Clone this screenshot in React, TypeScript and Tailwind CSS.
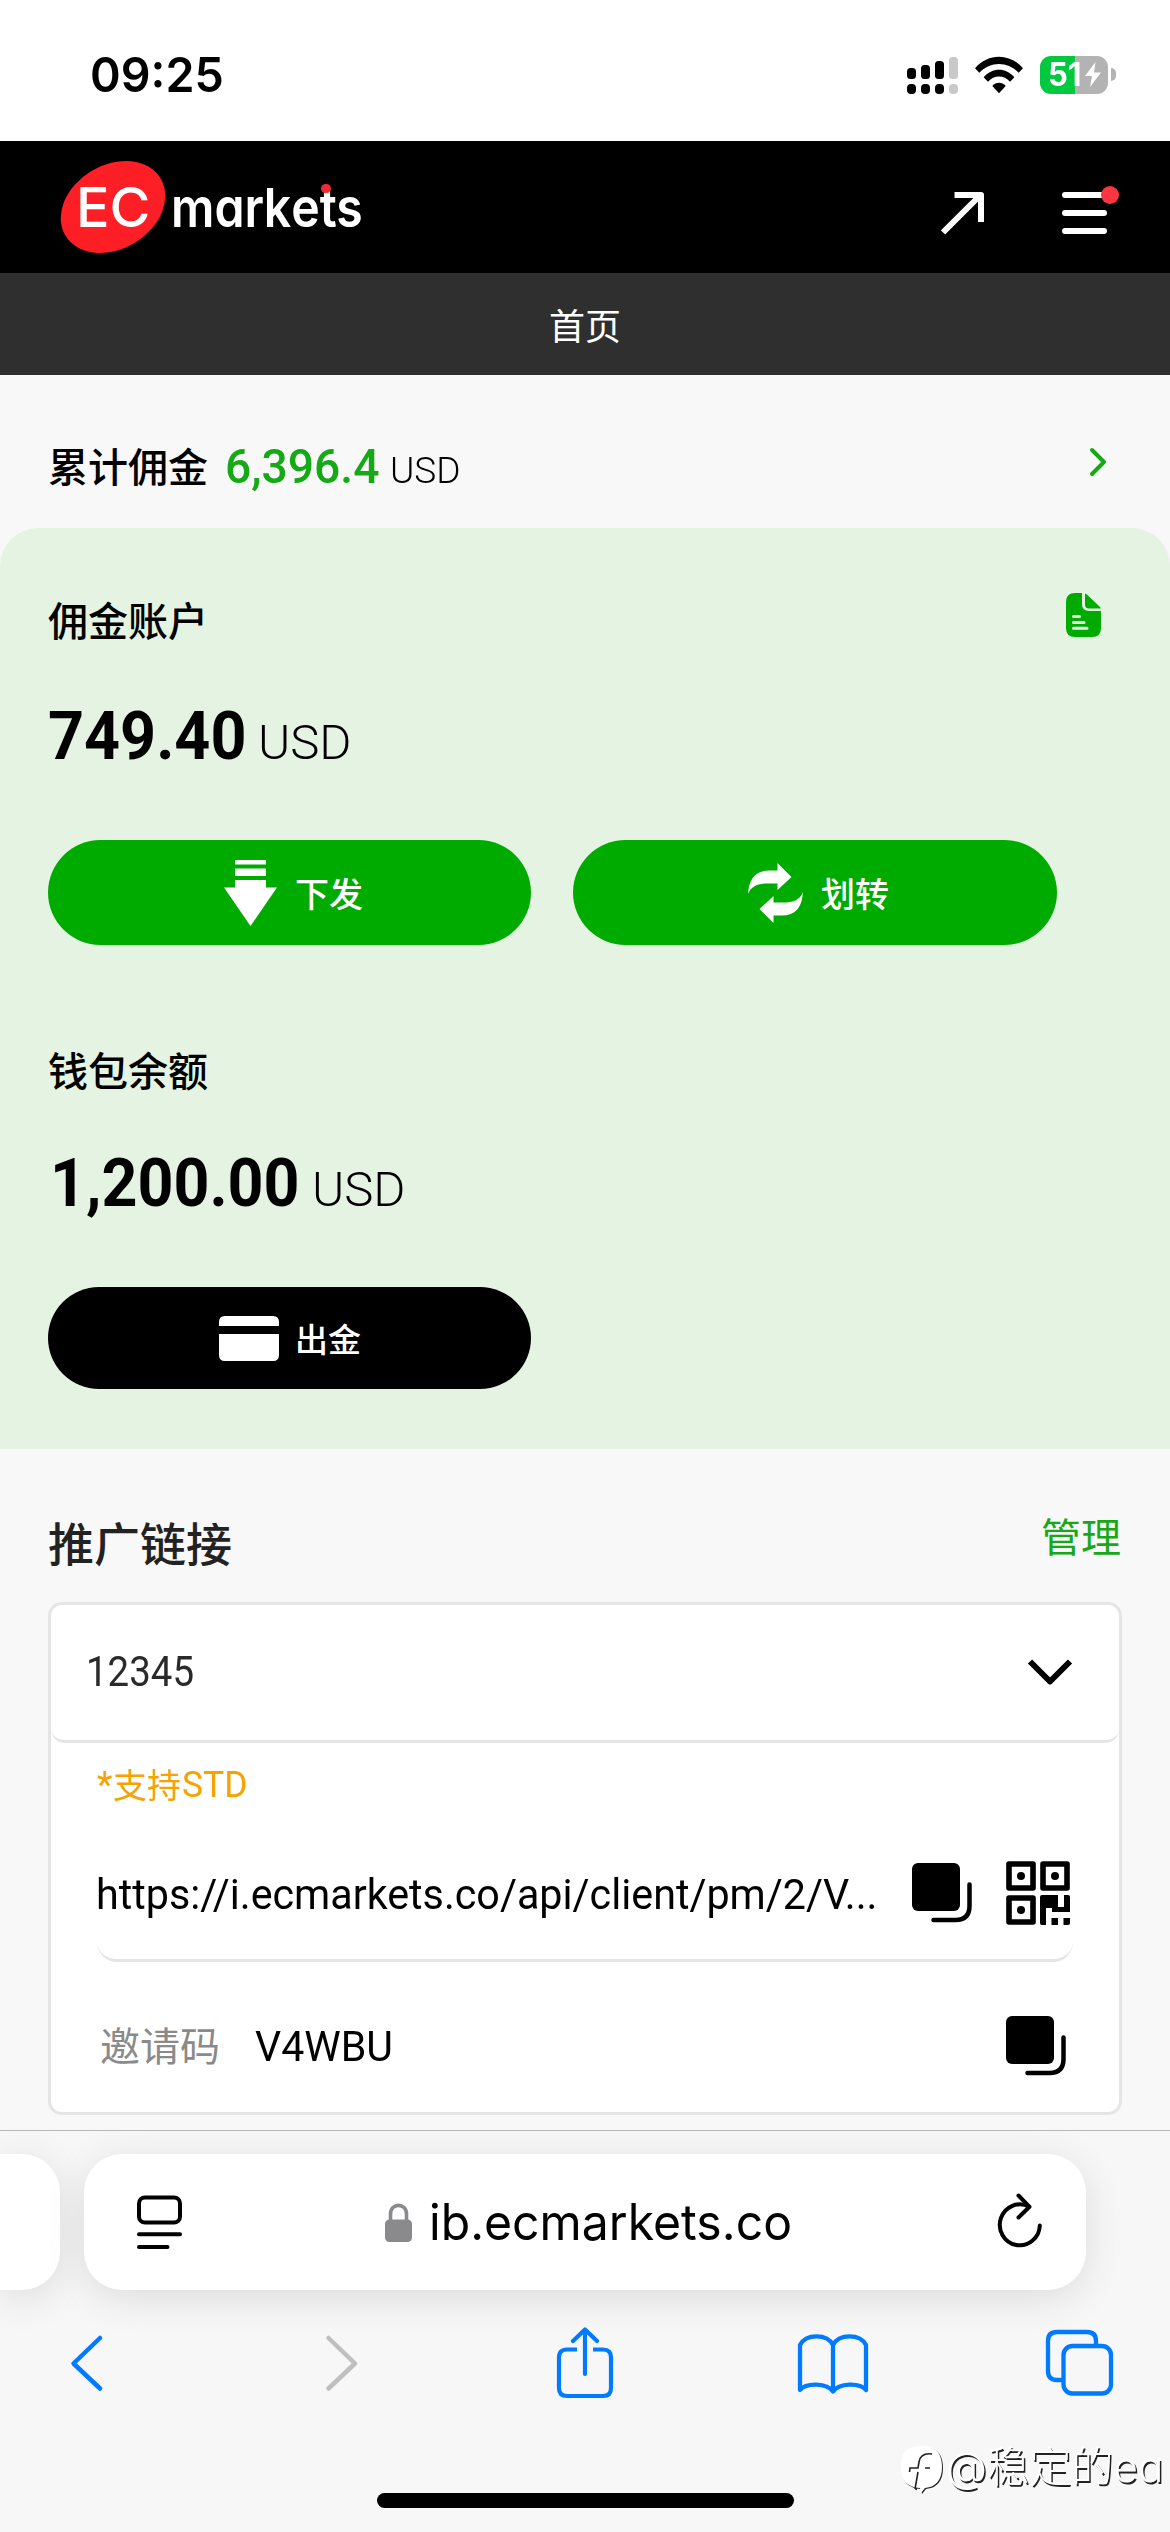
import { useLayoutEffect, useRef, useState, type ReactNode } from "react";

/** Single-line text condensed or stretched horizontally to fill the width of its box. */
function Fit({ className, children }: { className: string; children: ReactNode }) {
  const box = useRef<HTMLSpanElement>(null);
  const text = useRef<HTMLSpanElement>(null);
  const [scale, setScale] = useState(1);
  useLayoutEffect(() => {
    if (box.current && text.current) {
      setScale(box.current.offsetWidth / text.current.offsetWidth);
    }
  }, []);
  return (
    <span ref={box} className={"block shrink-0 whitespace-nowrap leading-none " + className}>
      <span ref={text} className="inline-block origin-left" style={{ transform: `scaleX(${scale})` }}>
        {children}
      </span>
    </span>
  );
}

function StatusBar() {
  return (
    <div className="flex h-[141px] items-center justify-between bg-white pt-[8px] pr-[54px] pl-[90px]">
      <Fit className="w-[134px] font-[Inter] text-[48px] font-semibold text-black">09:25</Fit>
      <div className="flex items-center">
        <svg className="h-[40px] w-[52px]" viewBox="0 0 52 40">
          <g fill="#000">
            <rect x="0" y="13" width="9" height="11" rx="3.5" />
            <rect x="14" y="10" width="9" height="14" rx="3.5" />
            <rect x="28" y="6" width="9" height="18" rx="3.5" />
            <rect x="0" y="29" width="9" height="10" rx="4" />
            <rect x="14" y="29" width="9" height="10" rx="4" />
            <rect x="28" y="29" width="9" height="10" rx="4" />
          </g>
          <g fill="#c9c9c9">
            <rect x="42" y="2" width="9" height="22" rx="3.5" />
            <rect x="42" y="29" width="9" height="10" rx="4" />
          </g>
        </svg>
        <svg className="ml-4 h-[38px] w-[48px]" viewBox="0 0 48 38">
          <path d="M0 12.2C13-3.2 35-3.2 48 12.2l-4.300 4.600C33 5 15 5 4.300 16.800z" />
          <path d="M8.600 21.200c8.500-10 22.300-10 30.800 0l-4.400 4.600c-6-7-16-7-22 0z" />
          <path d="M17.300 30c3.700-4.400 9.700-4.400 13.400 0L24 37.200z" />
        </svg>
        <div className="relative ml-[17px] flex h-[38px] w-[68px] items-center overflow-hidden rounded-[11px] bg-[linear-gradient(to_right,#00c940_35px,#b3b3b3_35px)] pl-[8px]">
          <Fit className="w-[33px] font-[Inter] text-[33px] font-bold text-white">51</Fit>
          <svg className="ml-[4px] h-[25px] w-[16px]" viewBox="0 0 16 25">
            <path fill="#fff" d="M10.500 0 0 14h7L5 25 16 10.500H9z" />
          </svg>
        </div>
        <div className="ml-[3px] h-[13px] w-[5px] rounded-r-full bg-[#b3b3b3]" />
      </div>
    </div>
  );
}

function Logo() {
  return (
    <div className="flex items-center">
      <div className="relative flex h-[92px] w-[106px] items-center justify-center">
        <svg className="absolute inset-0 h-full w-full" viewBox="0 0 106 92">
          <ellipse cx="53" cy="46" rx="55.500" ry="42" fill="#fe1f26" transform="rotate(-31 53 46)" />
        </svg>
        <Fit className="relative w-[75px] font-[Inter] text-[55px] font-medium text-white">EC</Fit>
      </div>
      <div className="relative ml-[5px] pt-[1px]">
        <Fit className="w-[192px] font-[Inter] text-[54px] font-semibold text-white [font-feature-settings:'cv11']">
          mar<span className="[font-variant:small-caps]">k</span>ets
        </Fit>
        <span className="absolute top-[4px] left-[150px] h-[9px] w-[10px] rounded-full bg-[#ee2a33]" />
      </div>
    </div>
  );
}

function Header() {
  return (
    <div className="flex h-[132px] items-center justify-between bg-black pr-[51px] pl-[60px]">
      <Logo />
      <div className="flex items-center pt-[12px]">
        <svg className="h-[44px] w-[44px]" viewBox="0 0 44 44" fill="none" stroke="#fff" strokeWidth="6">
          <path d="M2 41.500 39 4.500" />
          <path d="M13.500 4H40v27" strokeLinejoin="round" />
        </svg>
        <div className="relative ml-[77px] flex w-[57px] flex-col gap-[12px]">
          <span className="h-[6px] w-[45px] rounded-full bg-white" />
          <span className="h-[6px] w-[45px] rounded-full bg-white" />
          <span className="h-[6px] w-[45px] rounded-full bg-white" />
          <span className="absolute -top-[6px] right-0 h-[18px] w-[18px] rounded-full bg-[#fb3640]" />
        </div>
      </div>
    </div>
  );
}

function CommissionTotal() {
  return (
    <div className="flex h-[153px] items-center justify-between pr-[62px] pl-[48px] text-black">
      <div className="flex items-center pt-[30px]">
        <span className="-mt-[3px] text-[40px] leading-none font-medium">累计佣金</span>
        <Fit className="ml-[17px] w-[154px] font-[Roboto] text-[48px] font-medium text-[#16a916]">6,396.4</Fit>
        <Fit className="mt-[8px] ml-[11px] w-[71px] font-[Roboto] text-[36px] font-light">USD</Fit>
      </div>
      <svg className="mt-[21px] h-[32px] w-[20px]" viewBox="0 0 20 32" fill="none" stroke="#16a916" strokeWidth="4" strokeLinecap="round" strokeLinejoin="round">
        <path d="m4 4 12 12L4 28" />
      </svg>
    </div>
  );
}

function Amount({ value, valueClass }: { value: string; valueClass: string }) {
  return (
    <div className="flex h-[67px] items-center">
      <Fit className={"pt-[2px] font-[Roboto] text-[66px] font-bold " + valueClass}>{value}</Fit>
      <Fit className="mt-[14px] ml-[12px] w-[93px] font-[Roboto] text-[48px] font-light">USD</Fit>
    </div>
  );
}

function Accounts() {
  return (
    <div className="h-[921px] rounded-t-[38px] bg-[#e5f3e3] px-[48px] text-black">
      <div className="flex h-[174px] items-center justify-between pr-[21px]">
        <span className="pt-[8px] text-[40px] leading-none font-medium">佣金账户</span>
        <svg className="h-[44px] w-[35px]" viewBox="0 0 35 44">
          <path fill="#00ab00" d="M9 0h7v11q0 7 7 7h12v17q0 9-9 9H9q-9 0-9-9V9q0-9 9-9Z" />
          <path fill="#00ab00" d="M19 0.500q2 .5 4 3L34 14q.8.800.5 1.500H23q-4 0-4-4Z" />
          <path stroke="#e5f3e3" strokeWidth="3" strokeLinecap="round" d="M7.500 23.500h6M7.500 29.500h10.500M7.500 35.200H21" />
        </svg>
      </div>
      <Amount value="749.40" valueClass="w-[198px]" />
      <div className="mt-[71px] flex gap-[42px] text-[34px] font-medium text-white">
        <div className="flex h-[105px] w-[483px] items-center rounded-full bg-[#00ab00] pl-[176px]">
          <svg className="h-[66px] w-[53px]" viewBox="0 0 53 66" fill="#fff">
            <path d="M11 0h31v4.500H11zM11 8.500h31v7.500H11zM11 20h31v7.500h11L26.500 66 0 27.500h11z" />
          </svg>
          <span className="ml-[18px] leading-none">下发</span>
        </div>
        <div className="flex h-[105px] w-[484px] items-center rounded-full bg-[#00ab00] pl-[175px]">
          <svg className="h-[60px] w-[55px]" viewBox="0 0 55 60" fill="#fff">
            <path d="M0 31C1 15 8 7.500 21 7.500h8.500V0L43.500 14 29.500 27V20.500H20C10 20.500 3.500 22.500 0 31Z" />
            <path d="M55 29C54 45 47 52.500 34 52.500h-8.500V60L11.500 46 25.500 33v6.500H35C45 39.500 51.500 37.500 55 29Z" />
          </svg>
          <span className="ml-[18px] leading-none">划转</span>
        </div>
      </div>
      <div className="mt-[104px] text-[40px] leading-none font-medium">钱包余额</div>
      <div className="mt-[60px] pl-[2px]">
        <Amount value="1,200.00" valueClass="w-[250px]" />
      </div>
      <div className="mt-[71px] flex h-[102px] w-[483px] items-center rounded-full bg-black pl-[171px] text-[33px] font-medium text-white">
        <svg className="h-[45px] w-[60px]" viewBox="0 0 60 45" fill="#fff">
          <path d="M6 0h48q6 0 6 6v4H0V6q0-6 6-6ZM0 18h60v21q0 6-6 6H6q-6 0-6-6Z" />
        </svg>
        <span className="ml-[16px] leading-none">出金</span>
      </div>
    </div>
  );
}

function CopyIcon() {
  return (
    <svg className="h-[60px] w-[60px] shrink-0" viewBox="0 0 60 60">
      <rect x="0" y="0" width="48" height="48" rx="6" />
      <path d="M57.500 21.500V43q0 14-14 14H21.500" fill="none" stroke="#000" strokeWidth="4.500" strokeLinecap="round" />
    </svg>
  );
}

function QrIcon() {
  return (
    <svg className="h-[64px] w-[64px] shrink-0" viewBox="0 0 64 64">
      <g fill="none" stroke="#000" strokeWidth="5.600" strokeLinejoin="round">
        <rect x="3" y="3" width="24" height="24" />
        <rect x="37" y="3" width="24" height="24" />
        <rect x="3" y="37" width="24" height="24" />
      </g>
      <circle cx="15" cy="15" r="4" />
      <circle cx="49" cy="15" r="4" />
      <circle cx="15" cy="49" r="4" />
      <path d="M36 34h16v12h6V34h4q2 0 2 2v15H46v-4h-6v17h-4q-2 0-2-2V36q0-2 2-2ZM45.500 57H52v7h-6.500zM57.500 57H64v5q0 2-2 2h-4.500z" />
    </svg>
  );
}

function Referral() {
  return (
    <div className="h-[681px] px-[48px]">
      <div className="flex h-[153px] items-center justify-between pr-px">
        <span className="pt-[30px] text-[46px] leading-none font-medium text-[#222]">推广链接</span>
        <span className="pt-[18px] text-[40px] leading-none text-[#16a916]">管理</span>
      </div>
      <div className="h-[513px] rounded-[14px] border-[3px] border-[#e5e5e5] bg-white text-black">
        <div className="flex h-[138px] items-center justify-between rounded-b-[14px] border-b-[3px] border-[#e5e5e5] pr-[46px] pb-[2px] pl-[35px]">
          <Fit className="w-[108px] font-[Roboto] text-[42px] font-normal text-[#2a2a2a]">12345</Fit>
          <svg className="h-[26px] w-[46px]" viewBox="0 0 46 26" fill="none" stroke="#000" strokeWidth="6">
            <path d="m3 2.500 20 20 20-20" strokeLinejoin="round" />
          </svg>
        </div>
        <div className="pr-[46px] pl-[46px]">
          <div className="flex h-[84px] items-center font-normal text-[#f5a300]">
            <Fit className="w-[16px] font-[Roboto] text-[36px]">*</Fit>
            <span className="-mt-[2px] text-[34px] leading-none">支持</span>
            <Fit className="ml-px w-[65px] font-[Roboto] text-[36px]">STD</Fit>
          </div>
          <div className="flex h-[135px] items-center rounded-b-[20px] border-b-[3px] border-[#e5e5e5]">
            <Fit className="-ml-px w-[781px] pt-[3px] font-[Roboto] text-[42px]">
              https://i.ecmarkets.co/api/client/pm/2/V...
            </Fit>
            <div className="ml-[35px] flex items-center gap-[34px]">
              <CopyIcon />
              <QrIcon />
            </div>
          </div>
          <div className="flex h-[150px] items-center pt-[17px] pl-[3px]">
            <span className="-mt-[3px] text-[40px] leading-none text-[#8a8a8a]">邀请码</span>
            <Fit className="ml-[35px] w-[138px] pt-[2px] font-[Roboto] text-[42px]">V4WBU</Fit>
            <div className="ml-auto pr-[7px]">
              <CopyIcon />
            </div>
          </div>
        </div>
      </div>
    </div>
  );
}

function Browser() {
  return (
    <div className="relative h-[402px] overflow-hidden border-t border-[#b8b8b8] bg-[#f7f7f7]">
      <div className="flex gap-[24px] pt-[23px]">
        <div className="h-[136px] w-[60px] rounded-r-[38px] bg-white shadow-[0_8px_40px_rgba(0,0,0,0.11)]" />
        <div className="flex h-[136px] w-[1002px] items-center rounded-[38px] bg-white pl-[51px] shadow-[0_8px_40px_rgba(0,0,0,0.11)]">
          <svg className="h-[56px] w-[49px]" viewBox="0 0 49 56" fill="none" stroke="#000" strokeWidth="4" strokeLinecap="round">
            <rect x="4" y="3.500" width="41" height="25" rx="6" />
            <path d="M4 40.300h41M4 53h28.500" />
          </svg>
          <svg className="ml-[201px] h-[39px] w-[27px]" viewBox="0 0 27 39">
            <rect x="0" y="16.500" width="27" height="22.500" rx="4.500" fill="#8a8a8d" />
            <path d="M5.500 18v-7c0-11.500 16-11.500 16 0v7" fill="none" stroke="#8a8a8d" strokeWidth="3.600" />
          </svg>
          <Fit className="ml-[17px] w-[363px] font-[Inter] text-[50px] text-black">ib.ecmarkets.co</Fit>
          <svg className="mb-[4px] ml-[203px] h-[56px] w-[50px]" viewBox="0 0 50 56" fill="none" stroke="#000" strokeWidth="4" strokeLinecap="round" strokeLinejoin="round">
            <path d="M44.800 33.500A20 20.500 0 1 1 34 14.600" />
            <path d="m23.500 3.500 11 11.300-11 10.700" />
          </svg>
        </div>
      </div>
      <div className="mt-[37px] flex h-[72px] items-center pl-[69px]">
        <svg className="h-[58px] w-[35px]" viewBox="0 0 35 58" fill="none" stroke="#007aff" strokeWidth="4.500" strokeLinecap="round" strokeLinejoin="round">
          <path d="M31 4 4.500 29.500 31 54.500" />
        </svg>
        <svg className="ml-[220px] h-[58px] w-[35px]" viewBox="0 0 35 58" fill="none" stroke="#bfbfbf" strokeWidth="4.500" strokeLinecap="round" strokeLinejoin="round">
          <path d="M4.500 4 31 29.500 4.500 54.500" />
        </svg>
        <svg className="ml-[196px] h-[72px] w-[60px]" viewBox="0 0 60 72" fill="none" stroke="#007aff" strokeWidth="4.200" strokeLinejoin="round">
          <path d="M22 22.500H12q-8 0-8 8V61q0 8 8 8h36q8 0 8-8V30.500q0-8-8-8H38" />
          <path d="M30 47V3M18 14 30 2.500 42 14" strokeLinecap="round" />
        </svg>
        <svg className="ml-[181px] h-[62px] w-[74px]" viewBox="0 0 74 62" fill="none" stroke="#007aff" strokeWidth="4.300" strokeLinecap="round" strokeLinejoin="round">
          <path d="M37 13C31 1.500 10 1.500 4 13v45c6-7.500 27-7.500 33 1.500 6-9 27-9 33-1.500V13C64 1.500 43 1.500 37 13ZM37 13v46" />
        </svg>
        <svg className="ml-[175px] h-[68px] w-[70px]" viewBox="0 0 70 68" fill="none" stroke="#007aff" strokeWidth="4.300">
          <path d="M18 51h-6q-9 0-9-9V12q0-9 9-9h30q9 0 9 9v5" />
          <rect x="18.500" y="17" width="47.500" height="47.500" rx="9" />
        </svg>
      </div>
      <div className="absolute top-[314px] left-[901px] flex items-center">
        <svg className="h-[48px] w-[43px] drop-shadow-[1px_1px_0_#222]" viewBox="0 0 43 48">
          <path fill="#fff" d="M20 1c14 0 21 6 21 21 0 13-6 20-17 21l-4 5-1-5C6 42 0 36 0 22 0 7 6 1 20 1Z" />
          <path fill="none" stroke="#222" strokeWidth="1.600" d="M31 9c-8-1-12 2-13 8l-1 6H9l-.5 4M17 27l-3 17M24 23h5" />
        </svg>
        <Fit className="-mt-[5px] ml-[2px] w-[217px] font-[Inter,'Noto_Sans_CJK_SC'] text-[42px] font-light text-white [font-feature-settings:'cv11'] [text-shadow:1.5px_1.5px_0_#222]">
          @稳定的ea
        </Fit>
      </div>
      <div className="absolute bottom-[24px] left-[377px] h-[15px] w-[417px] rounded-full bg-black" />
    </div>
  );
}

export default function App() {
  return (
    <div className="flex h-[2532px] w-[1170px] flex-col overflow-hidden bg-[#f8f8f8] font-['Noto_Sans_CJK_SC',sans-serif]">
      <StatusBar />
      <Header />
      <div className="flex h-[102px] items-center justify-center bg-[#2f2f2f] text-[36px] leading-none text-white">
        首页
      </div>
      <CommissionTotal />
      <Accounts />
      <Referral />
      <Browser />
    </div>
  );
}
